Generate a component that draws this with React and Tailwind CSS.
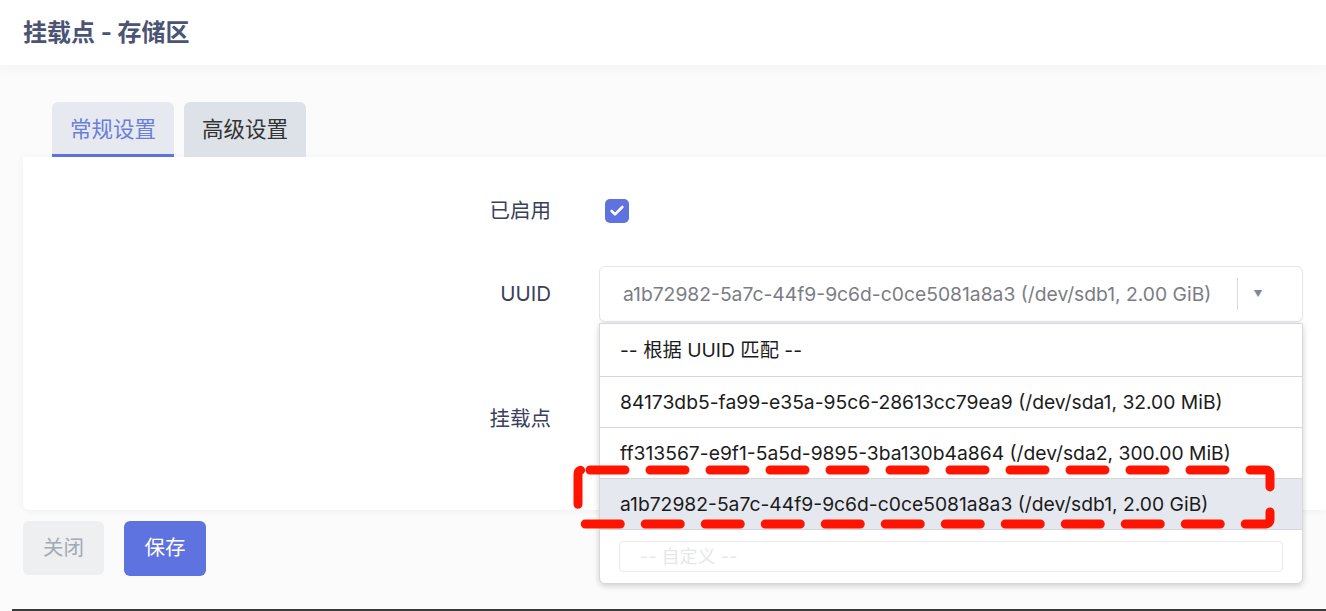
import { Check } from 'lucide-react';

// ── data ──────────────────────────────────────────────────────────────────────

const OPTIONS = [
  { id: 'match', label: '-- 根据 UUID 匹配 --', h: 'h-[53px]' },
  { id: 'sda1', label: '84173db5-fa99-e35a-95c6-28613cc79ea9 (/dev/sda1, 32.00 MiB)', h: 'h-[51px]' },
  { id: 'sda2', label: 'ff313567-e9f1-5a5d-9895-3ba130b4a864 (/dev/sda2, 300.00 MiB)', h: 'h-[51px]' },
  { id: 'sdb1', label: 'a1b72982-5a7c-44f9-9c6d-c0ce5081a8a3 (/dev/sdb1, 2.00 GiB)', h: 'h-[51px]' },
];

const SELECTED = 'sdb1';

const FONT = "font-['Inter','Noto_Sans_CJK_SC',sans-serif]";

// ── pieces ────────────────────────────────────────────────────────────────────

function Label({ children }) {
  return (
    <div className="w-[528px] shrink-0 text-right text-[20.5px] text-[#3b3f5c]">{children}</div>
  );
}

function Dropdown() {
  return (
    <div className="absolute left-[599px] top-[323px] z-20 w-[704px] rounded-b-md border border-[#d6d8dc] bg-white shadow-[0_2px_6px_rgba(0,0,0,0.18)]">
      {OPTIONS.map((o) => (
        <div
          key={o.id}
          className={
            `flex ${o.h} items-center border-b border-[#d4d6da] pl-[20px] text-[19.3px] text-[#1b1b20] ` +
            (o.id === SELECTED ? 'bg-[#e5e8ee]' : 'bg-white')
          }
        >
          {o.label}
        </div>
      ))}
      <div className="px-[19px] pt-[11px] pb-[11px]">
        <div className="flex h-[31px] items-center rounded border border-[#e8e9ec] pl-[20px] text-[18px] text-[#e6e7ea]">
          -- 自定义 --
        </div>
      </div>
    </div>
  );
}

// red dashed annotation round the highlighted option
function Annotation() {
  return (
    <svg className="absolute left-[572px] top-[464px] z-30" width="704" height="66" viewBox="0 0 704 66">
      <rect
        x="6"
        y="6"
        width="692"
        height="54"
        rx="4"
        fill="none"
        stroke="#ff1400"
        strokeWidth="9"
        strokeLinecap="round"
        strokeDasharray="35 25"
        strokeDashoffset="-8"
      />
    </svg>
  );
}

// ── page ──────────────────────────────────────────────────────────────────────

export default function App() {
  return (
    <div className={`relative h-[611px] w-[1326px] overflow-hidden bg-[#fbfbfc] ${FONT}`}>
      {/* header */}
      <div className="relative z-10 flex h-[65px] items-center bg-white pl-[23px] shadow-[0_3px_10px_rgba(0,0,0,0.035)]">
        <h1 className="text-[24px] font-bold text-[#4b5473]">挂载点 - 存储区</h1>
      </div>

      {/* tabs */}
      <div className="flex gap-[10px] pl-[52px] pt-[37px]">
        <div className="flex h-[55px] w-[122px] items-center justify-center rounded-t-md border-b-[3px] border-[#5e72e0] bg-[#e6e9f0] pt-[3px] text-[21.5px] text-[#6b7fd9]">
          常规设置
        </div>
        <div className="flex h-[55px] w-[122px] items-center justify-center rounded-t-md bg-[#dde1e8] text-[21.5px] text-[#333]">
          高级设置
        </div>
      </div>

      {/* card */}
      <div className="ml-[23px] flex h-[353px] flex-col rounded-bl-md bg-white pt-[38px] shadow-[0_1px_8px_rgba(0,0,0,0.05)]">
        <div className="flex h-[32px] items-center gap-[54px]">
          <Label>已启用</Label>
          <span className="flex h-[24px] w-[24px] items-center justify-center rounded-[5px] bg-[#5e72e0]">
            <Check size={16} strokeWidth={4} className="text-white" />
          </span>
        </div>

        <div className="mt-[39px] flex h-[56px] items-center gap-[48px]">
          <Label>UUID</Label>
          <div className="flex h-[56px] w-[704px] items-center rounded-md border border-[#e4e6ea] bg-white pl-[23px] pr-[24px] shadow-[0_1px_2px_rgba(0,0,0,0.06)]">
            <span className="flex-1 text-[19.3px] text-[#7b7d84]">
              a1b72982-5a7c-44f9-9c6d-c0ce5081a8a3 (/dev/sdb1, 2.00 GiB)
            </span>
            <span className="h-[32px] w-px bg-[#d8dadf]" />
            <span className="flex w-[40px] justify-center text-[9px] text-[#7d8799]">▼</span>
          </div>
        </div>

        <div className="mt-[69px] flex h-[56px] items-center gap-[48px]">
          <Label>挂载点</Label>
          <div className="h-[56px] w-[704px] rounded-md border border-[#e4e6ea]" />
        </div>
      </div>

      {/* actions */}
      <div className="flex gap-[20px] pl-[23px] pt-[11px]">
        <button className="h-[54px] w-[81px] rounded-md bg-[#eeeff1] text-[20.5px] text-[#a3a9b5]">关闭</button>
        <button className="h-[55px] w-[82px] rounded-md bg-[#5e72e0] text-[20.5px] text-white">保存</button>
      </div>

      <div className="absolute bottom-0 left-[12px] right-0 h-[2px] bg-[#3a3a3a]" />

      <Dropdown />
      <Annotation />
    </div>
  );
}
